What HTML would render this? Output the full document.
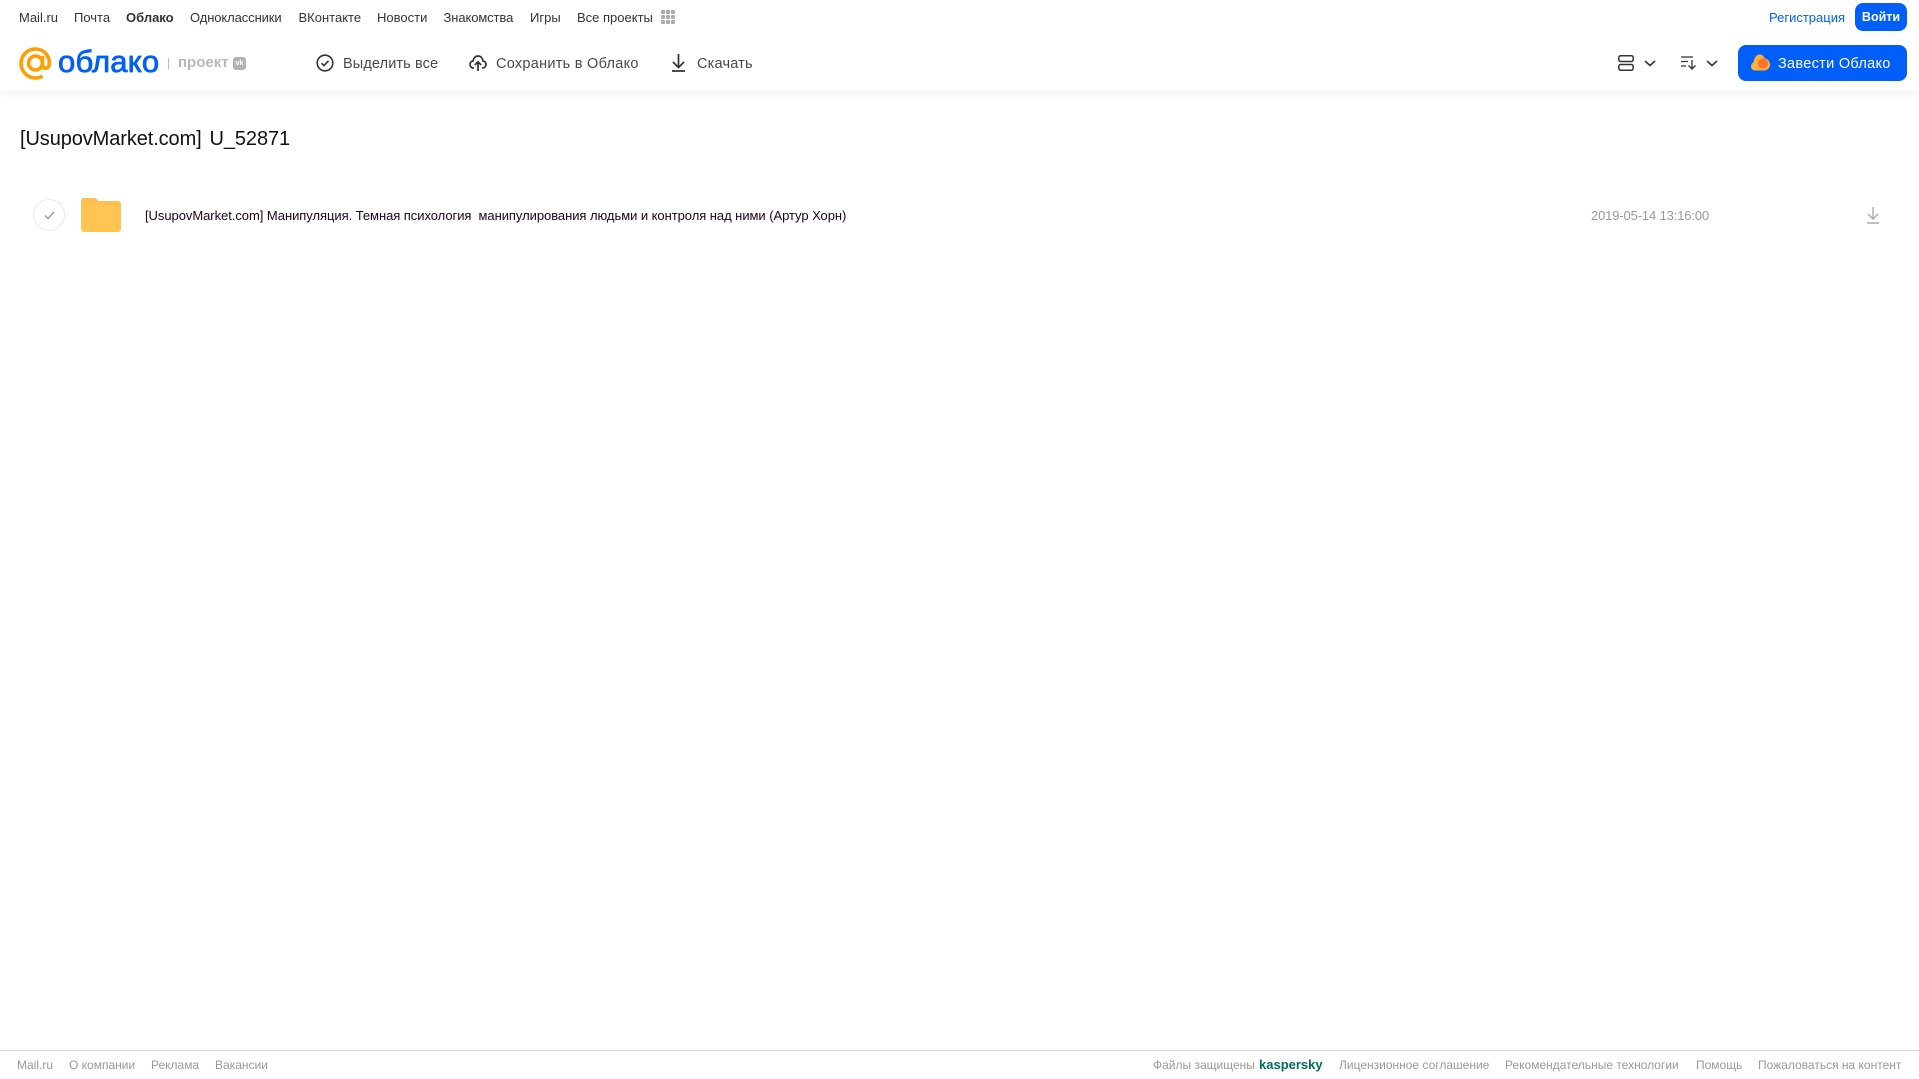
<!DOCTYPE html>
<html lang="ru"><head><meta charset="utf-8"><title>Облако</title>
<style>
html,body{margin:0;padding:0;width:1919px;height:1079px;overflow:hidden;background:#fff;font-family:"Liberation Sans",sans-serif}
.a{position:absolute;white-space:nowrap}
.n{top:10px;font-size:13px;line-height:15px;color:#333}
.t{top:55px;font-size:14.5px;line-height:18px;color:#484848;letter-spacing:.2px}
.f{top:1057px;font-size:12px;line-height:16px;color:#999}
svg{position:absolute;overflow:visible}
</style></head><body>
<div class="a" style="left:0;top:0;width:1919px;height:91px;background:#fff;box-shadow:0 2px 8px rgba(0,0,0,.07)"></div>

<span class="a n" style="left:19px">Mail.ru</span>
<span class="a n" style="left:74px">Почта</span>
<span class="a n" style="left:126px;font-weight:700">Облако</span>
<span class="a n" style="left:190px;letter-spacing:-.1px">Одноклассники</span>
<span class="a n" style="left:298.500px">ВКонтакте</span>
<span class="a n" style="left:377px">Новости</span>
<span class="a n" style="left:443.500px;letter-spacing:-.1px">Знакомства</span>
<span class="a n" style="left:530px">Игры</span>
<span class="a n" style="left:577px">Все проекты</span>
<svg style="left:661px;top:10px" width="14" height="14" fill="#aaa"><rect width="4" height="4" rx="1"/><rect x="5" width="4" height="4" rx="1"/><rect x="10" width="4" height="4" rx="1"/><rect y="5" width="4" height="4" rx="1"/><rect x="5" y="5" width="4" height="4" rx="1"/><rect x="10" y="5" width="4" height="4" rx="1"/><rect y="10" width="4" height="4" rx="1"/><rect x="5" y="10" width="4" height="4" rx="1"/><rect x="10" y="10" width="4" height="4" rx="1"/></svg>

<span class="a n" style="left:1769px;color:#005ff9">Регистрация</span>
<div class="a" style="left:1855px;top:3px;width:52px;height:28px;border-radius:8px;background:#005ff9;color:#fff;font-size:12.5px;font-weight:700;line-height:28px;text-align:center">Войти</div>

<svg style="left:19px;top:47px" width="33" height="33" viewBox="0 0 33 33" fill="none" stroke="#ff9e00" stroke-width="3.6"><circle cx="16.500" cy="16" r="7"/><path d="M23.500 9v9.500c0 3.600 5.500 4 6.600-.6C31.600 9.500 25 2 16.500 2 8.600 2 2 8.400 2 16.300 2 24.500 8.600 31 16.500 31c2.800 0 5-.6 7-1.800"/></svg>
<span class="a" style="left:58px;top:42px;font-size:31px;line-height:40px;color:#005ff9;letter-spacing:.2px;-webkit-text-stroke:.8px #005ff9">облако</span>
<div class="a" style="left:168px;top:58px;width:1px;height:11px;background:#bbb"></div>
<span class="a" style="left:178px;top:54px;font-size:15px;line-height:18px;font-weight:700;color:#b8b8b8">проект</span>
<div class="a" style="left:233px;top:57px;width:13px;height:13px;border-radius:3px;background:#b3b3b3;color:#fff;font-size:7px;line-height:13px;font-weight:700;text-align:center">vk</div>

<svg style="left:316px;top:54px" width="18" height="18" viewBox="0 0 18 18" fill="none" stroke="#333" stroke-width="1.600"><circle cx="9" cy="9" r="7.800"/><path d="M5.500 9.200l2.500 2.400 4.500-4.800"/></svg>
<span class="a t" style="left:343px;letter-spacing:.12px">Выделить все</span>
<svg style="left:469px;top:54px" width="18" height="18" viewBox="0 0 18 18" fill="none" stroke="#333" stroke-width="1.700"><path d="M5 14H4.500C2.500 14 1 12.500 1 10.500S2.500 7.200 4 7C4.500 4 6.500 2 9 2s4.500 2 5 5c1.700.2 3 1.600 3 3.500S15.500 14 13.500 14H13"/><path d="M9 17V8M5.800 11L9 7.800 12.200 11"/></svg>
<span class="a t" style="left:496px;letter-spacing:.27px">Сохранить в Облако</span>
<svg style="left:671px;top:54px" width="15" height="18" viewBox="0 0 15 18" fill="none" stroke="#333" stroke-width="1.700"><path d="M7.500 0v13M2 8l5.500 5.500L13 8M1 17h13"/></svg>
<span class="a t" style="left:697px">Скачать</span>

<svg style="left:1618px;top:55px" width="16" height="16" viewBox="0 0 16 16" fill="none" stroke="#333" stroke-width="1.500"><rect x=".8" y=".8" width="14.400" height="5.700" rx="1.800"/><rect x=".8" y="9.500" width="14.400" height="5.700" rx="1.800"/></svg>
<svg style="left:1644px;top:60px" width="12" height="7" fill="none" stroke="#333" stroke-width="1.600"><path d="M1 1l5 4.500L11 1"/></svg>
<svg style="left:1681px;top:56px" width="16" height="14" viewBox="0 0 16 14" fill="none" stroke="#333" stroke-width="1.300"><path d="M0 1h12M0 5.500h7M0 10h5M11 4v9M7.500 9.500L11 13l3.500-3.500"/></svg>
<svg style="left:1706px;top:60px" width="12" height="7" fill="none" stroke="#333" stroke-width="1.600"><path d="M1 1l5 4.500L11 1"/></svg>

<div class="a" style="left:1738px;top:45px;width:169px;height:36px;border-radius:8px;background:#005ff9"></div>
<svg style="left:1751px;top:54px" width="19" height="17" viewBox="0 0 19 17"><path d="M4 16.500C1.800 16.500 0 14.600 0 12.300 0 10.500 1 9 2.600 8.300 3 4 5.300.5 8.500.5c2.500 0 4.300 1.600 5 3.700C16.800 4.700 19 7.500 19 10.500c0 3.400-2.600 6-6 6z" fill="#ffb03a"/><circle cx="12" cy="9.500" r="5" fill="#f5732a"/></svg>
<span class="a t" style="left:1778px;color:#fff;letter-spacing:.3px">Завести Облако</span>

<div class="a" style="left:20px;top:126px;font-size:20px;line-height:26px;color:#111;letter-spacing:-.1px;word-spacing:2.500px">[UsupovMarket.com] U_52871</div>

<div class="a" style="left:33px;top:199px;width:30px;height:30px;border:1px solid #eaeaea;border-radius:50%"></div>
<svg style="left:43.500px;top:211px" width="11" height="9" fill="none" stroke="#999" stroke-width="1.300"><path d="M1 4.500L4 7.500 10 1"/></svg>
<svg style="left:81px;top:198px" width="40" height="34" viewBox="0 0 40 34"><path d="M3 0h10c2 0 3 1 4 3h20a3 3 0 0 1 3 3v5H0V3a3 3 0 0 1 3-3z" fill="#fbbf52"/><path d="M0 7h40v24a3 3 0 0 1-3 3H3a3 3 0 0 1-3-3z" fill="#ffc452"/></svg>
<div class="a" style="left:145px;top:208px;font-size:13px;line-height:16px;color:#200020;letter-spacing:-.05px">[UsupovMarket.com] Манипуляция. Темная психология&nbsp; манипулирования людьми и контроля над ними (Артур Хорн)</div>
<div class="a" style="left:1591px;top:208px;font-size:13px;line-height:16px;color:#999;letter-spacing:-.14px">2019-05-14 13:16:00</div>
<svg style="left:1866px;top:206px" width="14" height="18" viewBox="0 0 14 18" fill="none" stroke="#aaa" stroke-width="1.400"><path d="M7 1v12M2 8l5 5 5-5M1 17h12"/></svg>

<div class="a" style="left:0;top:1050px;width:1919px;height:1px;background:#d9d9d9"></div>
<span class="a f" style="left:17px">Mail.ru</span>
<span class="a f" style="left:69px">О компании</span>
<span class="a f" style="left:151px">Реклама</span>
<span class="a f" style="left:215px">Вакансии</span>
<span class="a f" style="left:1153px">Файлы защищены</span>
<span class="a f" style="left:1259px;color:#006d5c;font-weight:700;font-size:13px">kaspersky</span>
<span class="a f" style="left:1339px">Лицензионное соглашение</span>
<span class="a f" style="left:1505px">Рекомендательные технологии</span>
<span class="a f" style="left:1696px">Помощь</span>
<span class="a f" style="left:1758px">Пожаловаться на контент</span>
</body></html>
